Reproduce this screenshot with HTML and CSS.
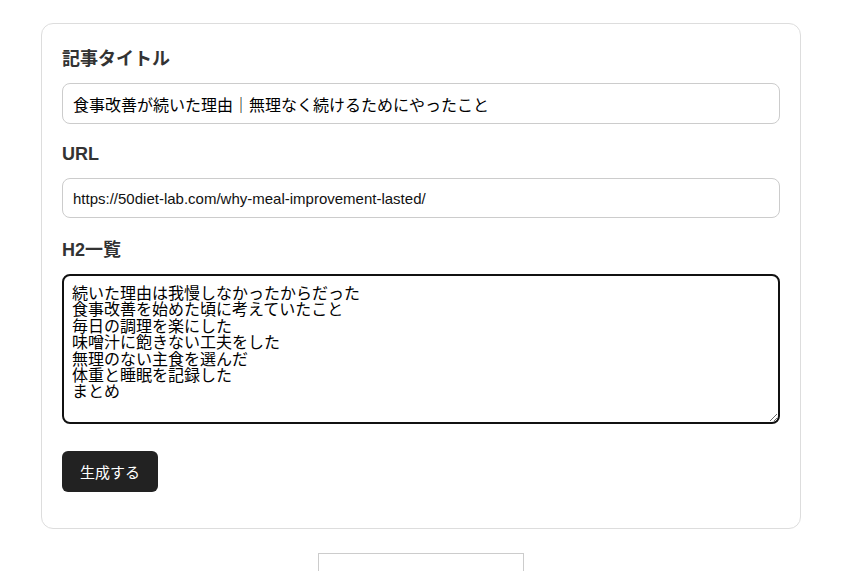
FILE: index.html
```html
<!DOCTYPE html>
<html lang="ja">
<head>
<meta charset="utf-8">
<title>記事生成</title>
<link rel="stylesheet" href="styles.css">
</head>
<body>
<div class="page">
  <form class="card">
    <div class="field">
      <label class="label" for="title">記事タイトル</label>
      <input class="input input-jp" id="title" type="text" spellcheck="false" value="食事改善が続いた理由｜無理なく続けるためにやったこと">
    </div>
    <div class="field field-url">
      <label class="label" for="url">URL</label>
      <input class="input input-url" id="url" type="text" spellcheck="false" value="https://50diet-lab.com/why-meal-improvement-lasted/">
    </div>
    <div class="field field-last">
      <label class="label" for="h2">H2一覧</label>
      <textarea class="textarea is-focused" id="h2" spellcheck="false">続いた理由は我慢しなかったからだった
食事改善を始めた頃に考えていたこと
毎日の調理を楽にした
味噌汁に飽きない工夫をした
無理のない主食を選んだ
体重と睡眠を記録した
まとめ</textarea>
    </div>
    <button class="button" type="button">生成する</button>
  </form>
  <div class="output"></div>
</div>
</body>
</html>
```

FILE: styles.css
```css
html, body {
  margin: 0;
  padding: 0;
  background: #fff;
}

body {
  font-family: "Liberation Sans", "Noto Sans CJK JP", sans-serif;
  color: #222;
  overflow: hidden;
}

.page {
  width: 760px;
  padding: 23px 0 0 41px;
}

.card {
  display: flex;
  flex-direction: column;
  align-items: flex-start;
  border: 1px solid #dddddd;
  border-radius: 12px;
  padding: 24px 20px 36px;
  background: #fff;
}

.field {
  display: flex;
  flex-direction: column;
  align-self: stretch;
  margin-bottom: 19px;
}

.field-url {
  margin-bottom: 21px;
}

.field-last {
  margin-bottom: 27px;
}

.label {
  font-family: "Liberation Sans", "Noto Sans CJK JP", sans-serif;
  font-size: 18px;
  font-weight: bold;
  line-height: 22px;
  color: #333;
  margin-bottom: 13px;
}

.input {
  box-sizing: border-box;
  width: 100%;
  height: 41px;
  margin: 0;
  border: 1px solid #cccccc;
  border-radius: 8px;
  padding: 0 10px;
  background: #fff;
  color: #000;
  outline: none;
}

.input-jp {
  font-family: "Noto Sans CJK JP", sans-serif;
  font-size: 16px;
}

.input-url {
  font-family: "Liberation Sans", sans-serif;
  font-size: 15px;
  height: 40px;
  color: #111;
}

.textarea {
  box-sizing: border-box;
  width: 100%;
  height: 150px;
  margin: 0;
  padding: 10px 9px;
  border: 1px solid #cccccc;
  border-radius: 8px;
  font-family: "Noto Sans CJK JP", sans-serif;
  font-size: 16px;
  line-height: 16.4px;
  color: #000;
  background: #fff;
  resize: vertical;
  outline: none;
}

.textarea.is-focused {
  border: 2px solid #111;
  padding: 8px 8px;
}

.button {
  height: 41px;
  padding: 0 18px;
  border: none;
  border-radius: 6px;
  background: #222;
  color: #fff;
  font-family: "Noto Sans CJK JP", sans-serif;
  font-size: 15px;
  cursor: pointer;
}

.output {
  box-sizing: border-box;
  width: 206px;
  height: 60px;
  margin: 24px auto 0;
  border: 1px solid #cccccc;
  background: #fff;
}
```
